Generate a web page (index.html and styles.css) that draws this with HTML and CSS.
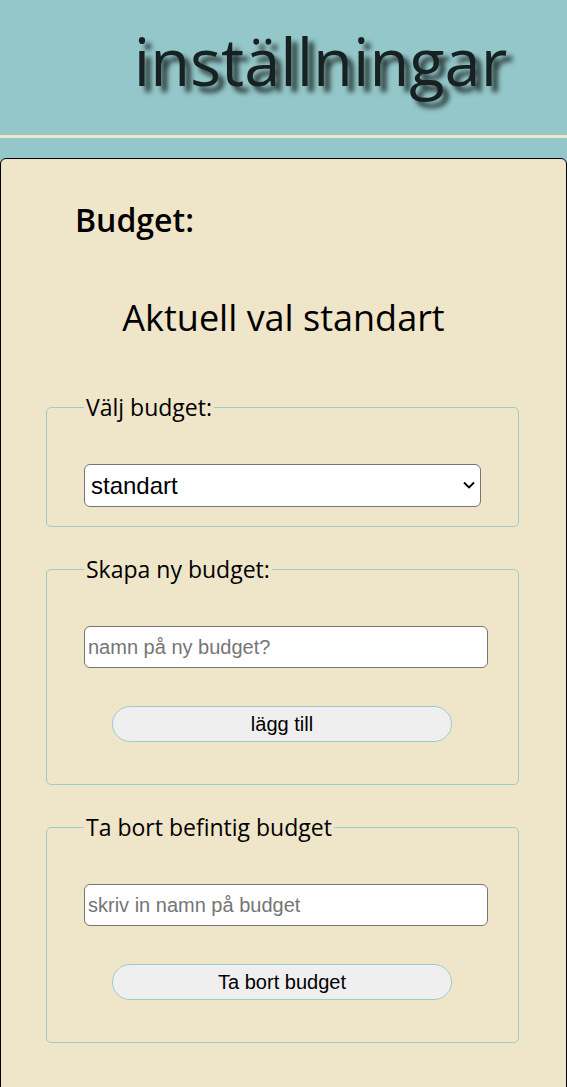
FILE: index.html
```
<html>
<head>
    <meta charset="utf-8">
    <title>inställningar</title>
    <link rel="stylesheet" href="styles.css">
</head>
<body>
<div class="topp">
    <h1 class="rubrik">inställningar</h1>
</div>
<div class="kort">
    <h2 class="budget-rubrik">Budget:</h2>
    <h3 class="aktuell">Aktuell val standart</h3>

    <div class="falt-lista">
        <fieldset class="falt">
            <legend>Välj budget:</legend>
            <div class="val-ram">
                <select class="val">
                    <option>standart</option>
                </select>
                <svg class="pil" width="12" height="8" viewBox="0 0 12 8">
                    <path d="M1 1.5 L6 6.5 L11 1.5" fill="none" stroke="#000" stroke-width="1.8"/>
                </svg>
            </div>
        </fieldset>

        <fieldset class="falt">
            <legend>Skapa ny budget:</legend>
            <input class="text-falt" type="text" placeholder="namn på ny budget?">
            <button class="knapp">lägg till</button>
        </fieldset>

        <fieldset class="falt">
            <legend>Ta bort befintig budget</legend>
            <input class="text-falt" type="text" placeholder="skriv in namn på budget">
            <button class="knapp">Ta bort budget</button>
        </fieldset>
    </div>
</div>
</body>
</html>
```

FILE: styles.css
```
*{
    margin: 0px;
    padding: 0px;
    box-sizing: border-box;
}
body{
    background-color: #94c7c9;
    font-family: "Open Sans", "Noto Sans", sans-serif;
}
/*rubriken längst upp*/
.topp{
    padding: 29px 0px 41px 74px;
    border-bottom: 3px solid #efe5c8;
    text-align: center;
}
.rubrik{
    font-size: 65px;
    line-height: 65px;
    font-weight: 400;
    color: #172122;
    text-shadow: 6px 6px 5px #263535;
}
.kort{
    margin-top: 20px;
    background-color: #efe5c8;
    border: 1px solid #000;
    border-radius: 6px 6px 0px 0px;
    padding: 41px 0px 60px;
}
.budget-rubrik{
    font-size: 32px;
    line-height: 40px;
    font-weight: 600;
    padding-left: 74px;
}
.aktuell{
    margin-top: 56px;
    font-size: 36px;
    line-height: 44px;
    font-weight: 500;
    text-align: center;
}
.falt-lista{
    margin: 52px 0px 0px 45px;
    width: 473px;
    display: flex;
    flex-direction: column;
    gap: 27px;
}
.falt{
    border: 1px solid #9ccccd;
    border-radius: 5px;
    padding: 0px 30px 19px 37px;
}
.falt legend{
    font-size: 23px;
    line-height: 30px;
    padding: 0px 2px;
}
.val-ram{
    position: relative;
    margin-top: 42px;
    width: 397px;
}
.val{
    display: block;
    width: 397px;
    height: 43px;
    appearance: none;
    font-family: "Liberation Sans", Arial, sans-serif;
    font-size: 24px;
    color: #000;
    background-color: #fff;
    border: 1px solid #767676;
    border-radius: 6px;
    padding-left: 6px;
}
/*pilen i select*/
.pil{
    position: absolute;
    right: 6px;
    top: 17px;
    pointer-events: none;
}
.text-falt{
    display: block;
    margin-top: 42px;
    width: 404px;
    height: 42px;
    font-family: "Liberation Sans", Arial, sans-serif;
    font-size: 20px;
    border: 1px solid #767676;
    border-radius: 6px;
    padding: 0px 3px;
    background-color: #fff;
}
.text-falt::placeholder{
    color: #757575;
}
.knapp{
    display: block;
    margin: 38px 0px 23px 28px;
    width: 340px;
    height: 36px;
    font-family: "Liberation Sans", Arial, sans-serif;
    font-size: 20px;
    color: #000;
    background-color: #efefef;
    border: 1px solid #9ccccd;
    border-radius: 18px;
}
```
